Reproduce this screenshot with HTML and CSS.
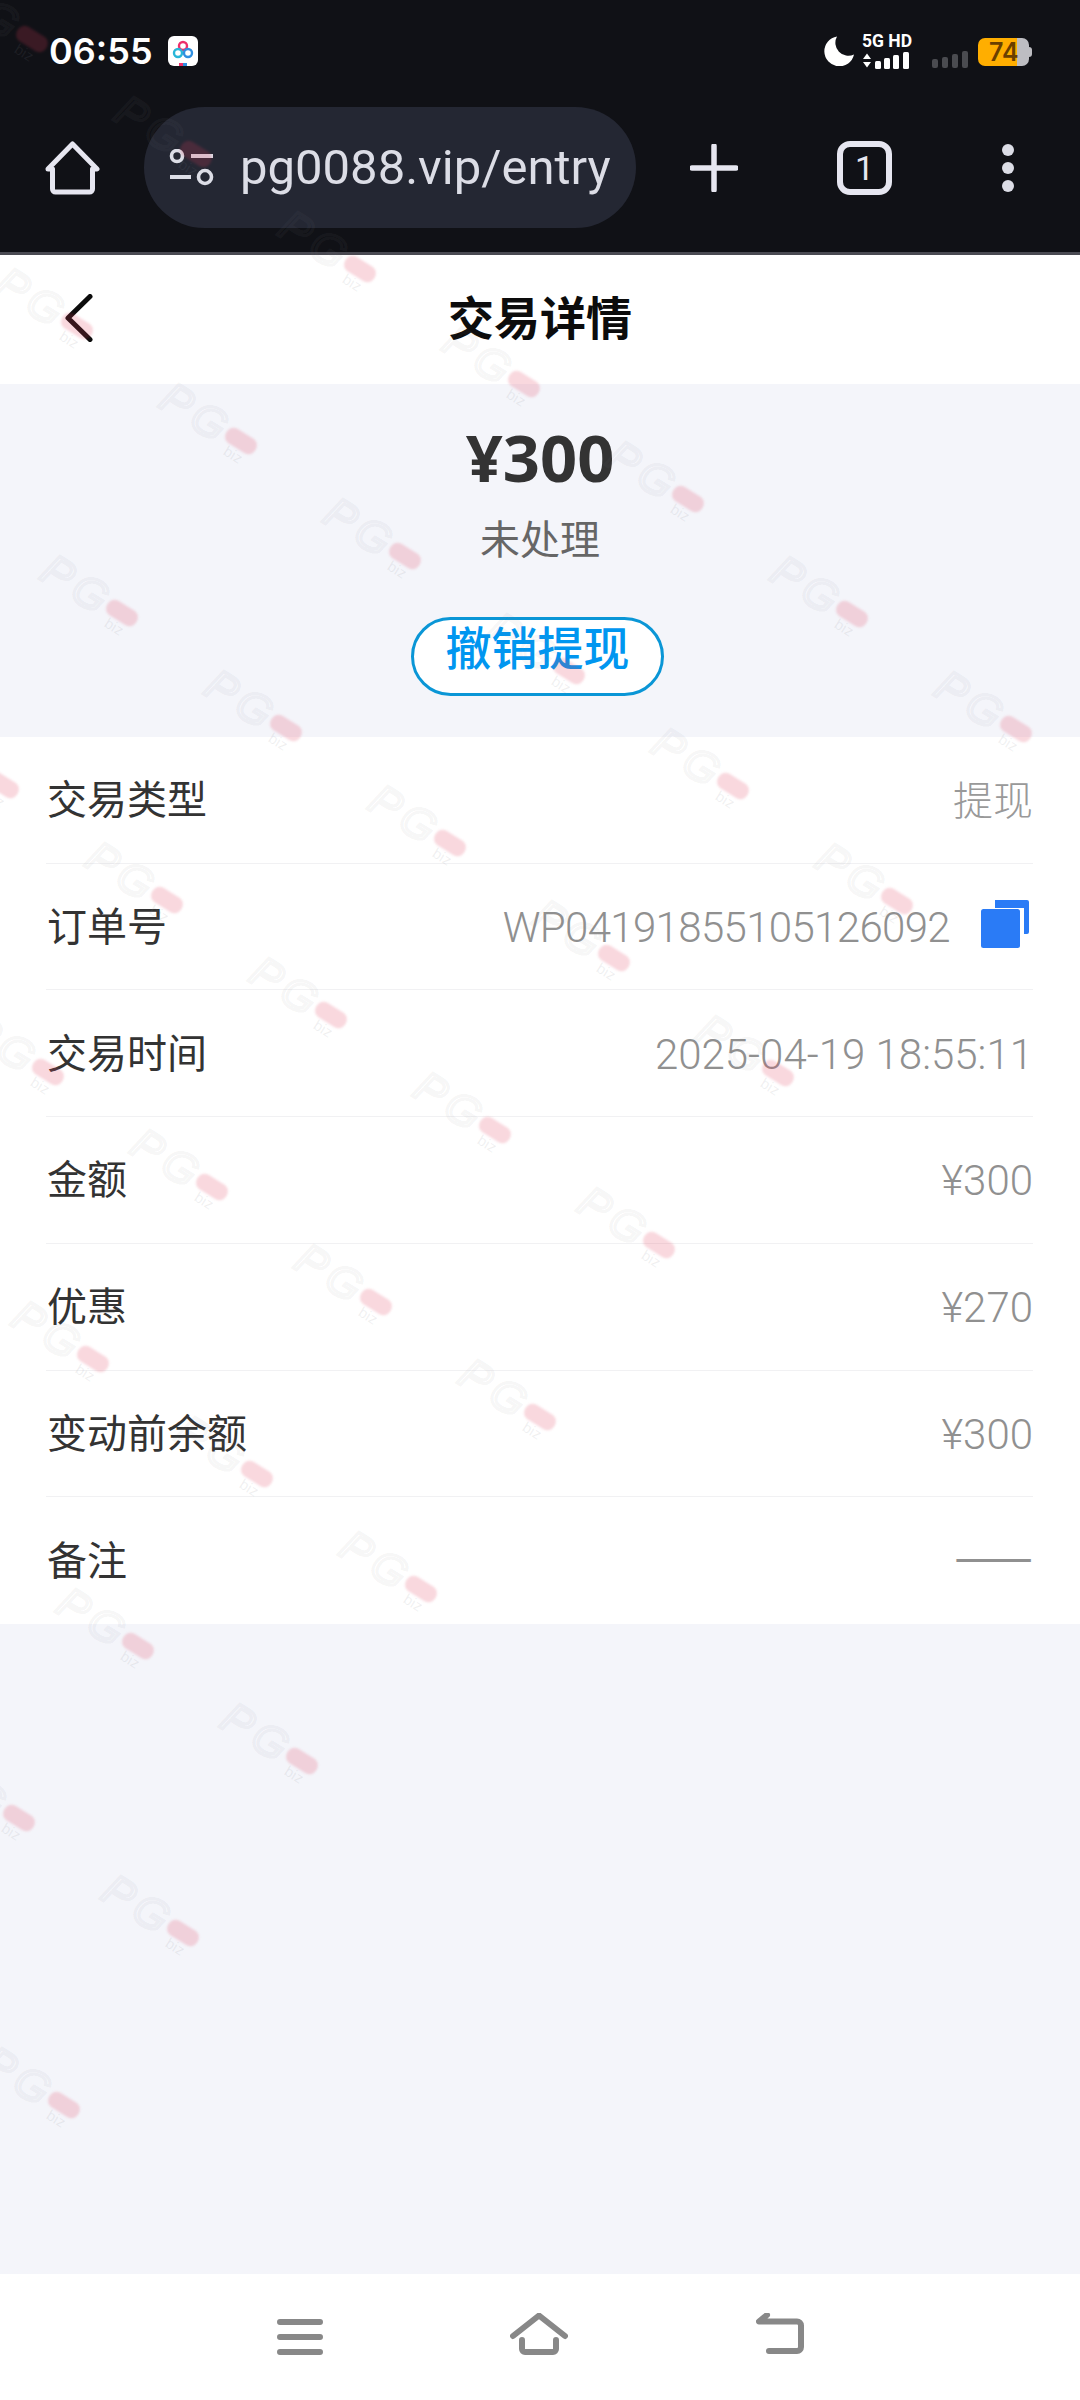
FILE: index.html
```html
<!DOCTYPE html>
<html lang="zh-CN">
<head>
<meta charset="utf-8">
<title>交易详情</title>
<link rel="stylesheet" href="styles.css">
</head>
<body>
<div class="phone">
  <div class="chrome">
    <div class="statusbar">
      <div class="status-left">
        <span class="clock">06:55</span>
        <svg class="app-icon" viewBox="0 0 30 30" width="30" height="30">
          <rect width="30" height="30" rx="6" fill="#fff"/>
          <circle cx="15" cy="10" r="4" fill="none" stroke="#ee2f6b" stroke-width="2.4"/>
          <circle cx="10" cy="17" r="4" fill="none" stroke="#29b6d8" stroke-width="2.4"/>
          <circle cx="20" cy="17" r="4" fill="none" stroke="#2f8fe0" stroke-width="2.4"/>
          <rect x="11" y="27" width="4" height="3" fill="#ee2f6b"/>
          <rect x="15" y="27" width="4" height="3" fill="#2f8fe0"/>
        </svg>
      </div>
      <div class="status-right">
        <svg class="moon" viewBox="0 0 30 30" width="30" height="30"><path d="M13 0.5A15 15 0 1 0 30 18.5 A13 13 0 0 1 13 0.5Z" fill="#fff"/></svg>
        <div class="net">
          <span class="net-label">5G HD</span>
          <svg viewBox="0 0 48 17" width="48" height="17">
            <path d="M1 7L5 1.500 9 7ZM1 10L5 15.500 9 10Z" fill="#fff"/>
            <g fill="#fff"><rect x="13" y="9" width="6" height="8" rx="1.500"/><rect x="22" y="6" width="6" height="11" rx="1.500"/><rect x="31" y="3" width="6" height="14" rx="1.500"/><rect x="41" y="0" width="6" height="17" rx="1.500"/></g>
          </svg>
        </div>
        <svg class="sim2" viewBox="0 0 36 17" width="36" height="17">
          <g fill="#4a4b50"><rect x="0" y="8" width="6" height="9" rx="2"/><rect x="10" y="6" width="6" height="11" rx="2"/><rect x="20" y="3" width="6" height="14" rx="2"/><rect x="30" y="0" width="6" height="17" rx="2"/></g>
        </svg>
        <div class="battery"><span class="battery-level">74</span></div>
      </div>
    </div>
    <div class="toolbar">
      <svg class="tb-home" viewBox="0 0 55 54" width="55" height="54"><path d="M3 28L27.500 3 52 28H47.500V48a3 3 0 0 1-3 3H10.500a3 3 0 0 1-3-3V28Z" fill="none" stroke="#e6e6f0" stroke-width="5" stroke-linejoin="round"/></svg>
      <div class="urlbar">
        <svg class="tune" viewBox="0 0 45 38" width="45" height="38">
          <g fill="none" stroke="#dcdde6" stroke-width="3.600"><circle cx="8" cy="7" r="5.500"/><circle cx="36" cy="28" r="6.500"/></g>
          <g fill="#dcdde6"><rect x="22" y="5" width="22" height="4"/><rect x="1" y="26" width="21" height="4"/></g>
        </svg>
        <span class="url">pg0088.vip/entry</span>
      </div>
      <svg class="tb-plus" viewBox="0 0 48 48" width="48" height="48"><path d="M24 2V46M2 24H46" stroke="#e6e6f0" stroke-width="5.500" stroke-linecap="round"/></svg>
      <div class="tabs">1</div>
      <svg class="tb-dots" viewBox="0 0 12 48" width="12" height="48"><g fill="#dcdde6"><circle cx="6" cy="6" r="6"/><circle cx="6" cy="24" r="6"/><circle cx="6" cy="42" r="6"/></g></svg>
    </div>
  </div>

  <header class="pagehead">
    <svg class="back" viewBox="0 0 28 48" width="28" height="48"><path d="M25 2.500L3 24 25 45.500" fill="none" stroke="#0c0c0c" stroke-width="5" stroke-linecap="round" stroke-linejoin="round"/></svg>
    <h1 class="title">交易详情</h1>
  </header>

  <main class="content">
    <section class="hero">
      <div class="amount">¥300</div>
      <div class="state">未处理</div>
      <div class="cancel">撤销提现</div>
    </section>

    <section class="list">
      <div class="row"><span class="label">交易类型</span><span class="value value-cjk">提现</span></div>
      <div class="row"><span class="label">订单号</span><span class="value value-order">WP04191855105126092
        <svg class="copy" viewBox="0 0 48 48" width="48" height="48"><path d="M14 0H46a2 2 0 0 1 2 2V32a2 2 0 0 1-2 2H43V8H14Z" fill="#2a7bf6"/><rect x="0" y="9" width="39" height="39" rx="2.500" fill="#2a7bf6"/></svg></span></div>
      <div class="row"><span class="label">交易时间</span><span class="value">2025-04-19 18:55:11</span></div>
      <div class="row"><span class="label">金额</span><span class="value">¥300</span></div>
      <div class="row"><span class="label">优惠</span><span class="value">¥270</span></div>
      <div class="row"><span class="label">变动前余额</span><span class="value">¥300</span></div>
      <div class="row"><span class="label">备注</span><span class="value value-dash">——</span></div>
    </section>
  </main>

  <nav class="navbar">
    <svg viewBox="0 0 46 36" width="46" height="36"><path d="M3 3H43M3 18H43M3 33H43" stroke="#888" stroke-width="6" stroke-linecap="round"/></svg>
    <svg class="nav-raised" viewBox="0 0 58 42" width="58" height="42"><path d="M3 23L29 2.500 55 23M12 27V36a3 3 0 0 0 3 3H43a3 3 0 0 0 3-3V27" fill="none" stroke="#888" stroke-width="6" stroke-linecap="round" stroke-linejoin="round"/></svg>
    <svg class="nav-raised" viewBox="0 0 48 42" width="48" height="42"><path d="M11 2L3 8.500H41a4 4 0 0 1 4 4V34a4 4 0 0 1-4 4H13" fill="none" stroke="#888" stroke-width="6" stroke-linecap="round" stroke-linejoin="round"/></svg>
  </nav>

  <svg class="watermarks" viewBox="0 0 1080 2400" width="1080" height="2400" aria-hidden="true">
    <defs>
      <g id="wm" transform="rotate(32)">
        <text class="wm-pg" x="-90" y="15">PG</text>
        <rect class="wm-pill" x="-17" y="-8.500" width="34" height="17" rx="8"/>
        <text class="wm-biz" x="-9" y="21">biz</text>
      </g>
    </defs>
    <use href="#wm" x="32" y="39"/><use href="#wm" x="196" y="154"/><use href="#wm" x="360" y="269"/><use href="#wm" x="524" y="384"/><use href="#wm" x="688" y="499"/><use href="#wm" x="852" y="614"/><use href="#wm" x="1016" y="729"/>
    <use href="#wm" x="77" y="326"/><use href="#wm" x="241" y="441"/><use href="#wm" x="405" y="556"/><use href="#wm" x="569" y="671"/><use href="#wm" x="733" y="786"/><use href="#wm" x="897" y="901"/>
    <use href="#wm" x="122" y="613"/><use href="#wm" x="286" y="728"/><use href="#wm" x="450" y="843"/><use href="#wm" x="614" y="958"/><use href="#wm" x="778" y="1073"/>
    <use href="#wm" x="3" y="785"/><use href="#wm" x="167" y="900"/><use href="#wm" x="331" y="1015"/><use href="#wm" x="495" y="1130"/><use href="#wm" x="659" y="1245"/>
    <use href="#wm" x="48" y="1072"/><use href="#wm" x="212" y="1187"/><use href="#wm" x="376" y="1302"/><use href="#wm" x="540" y="1417"/>
    <use href="#wm" x="93" y="1359"/><use href="#wm" x="257" y="1474"/><use href="#wm" x="421" y="1589"/>
    <use href="#wm" x="138" y="1646"/><use href="#wm" x="302" y="1761"/>
    <use href="#wm" x="19" y="1818"/><use href="#wm" x="183" y="1933"/>
    <use href="#wm" x="64" y="2105"/>
  </svg>
</div>
</body>
</html>
```
FILE: styles.css
```css
* { box-sizing: border-box; }
html, body { margin: 0; padding: 0; }
body { width: 1080px; height: 2400px; overflow: hidden; background: #f4f5fa; font-family: "Noto Sans CJK SC", "Noto Sans", sans-serif; }
.phone { position: relative; width: 1080px; height: 2400px; display: flex; flex-direction: column; }

.chrome { background: #101116; border-bottom: 3px solid #4a4a52; height: 255px; color: #fff; flex: none; }
.statusbar { height: 102px; padding: 0 48px 0 49px; display: flex; align-items: center; justify-content: space-between; }
.status-left { display: flex; align-items: center; gap: 15px; }
.clock { font-family: Inter, sans-serif; font-size: 36px; font-weight: 600; line-height: 40px; color: #fff; }
.app-icon { display: block; }
.status-right { display: flex; align-items: center; }
.moon { display: block; }
.net { display: flex; flex-direction: column; margin-left: 8px; gap: 4px; width: 48px; }
.net-label { font-family: "Roboto", sans-serif; font-weight: 700; font-size: 17.500px; line-height: 14px; white-space: nowrap; color: #fff; }
.net svg { display: block; }
.sim2 { display: block; margin-left: 22px; margin-top: 17px; }
.battery { position: relative; margin-left: 10px; margin-right: 3px; width: 51px; height: 28px; border-radius: 7px; background: linear-gradient(90deg, #ffae00 39px, #bdbdc2 39px); margin-top: 1px; display: flex; align-items: center; padding-left: 11px; }
.battery::after { content: ""; position: absolute; right: -3px; top: 9px; width: 3px; height: 10px; border-radius: 0 3px 3px 0; background: #bdbdc2; }
.battery-level { font-family: Inter, sans-serif; font-weight: 600; font-size: 25px; line-height: 28px; color: #6a3f00; }

.toolbar { display: flex; align-items: center; padding: 5px 0 24px 45px; }
.toolbar svg { display: block; flex: none; }
.urlbar { width: 492px; height: 121px; margin-left: 44px; border-radius: 61px; background: #242733; display: flex; align-items: center; padding-left: 25px; flex: none; }
.url { font-family: Roboto, sans-serif; font-size: 49px; line-height: 60px; font-weight: 400; color: #dcdde6; margin-left: 26px; white-space: nowrap; }
.tb-plus { margin-left: 54px; }
.tabs { margin-left: 99px; width: 55px; height: 54px; border: 6px solid #e6e6f0; border-radius: 13px; display: flex; align-items: center; justify-content: center; font-family: Roboto, sans-serif; font-weight: 400; font-size: 34px; color: #e6e6f0; flex: none; }
.tb-dots { margin-left: 110px; }

.pagehead { height: 129px; background: #fff; display: grid; grid-template-columns: 1fr auto 1fr; align-items: center; padding-left: 65px; padding-right: 65px; flex: none; }
.back { display: block; margin-top: -4px; }
.title { margin: -9px 0 0; font-size: 46px; line-height: 60px; font-weight: 700; color: #0c0c0c; }

.content { flex: 1; display: flex; flex-direction: column; }
.hero { height: 353px; display: flex; flex-direction: column; align-items: center; padding-top: 38px; }
.amount { font-family: "Noto Sans", sans-serif; font-weight: 700; font-size: 65px; line-height: 70px; color: #333; }
.state { margin-top: 20px; font-size: 40px; line-height: 50px; color: #666; }
.cancel { margin: 55px 0 0 -5px; width: 253px; height: 79px; border: 3px solid #0a96d6; border-radius: 40px; background: #fff; color: #0096f0; font-size: 46px; font-weight: 500; line-height: 50px; text-align: center; }

.list { background: #fff; padding: 0 47px 0 46px; height: 887px; display: grid; grid-auto-rows: 1fr; flex: none; }
.row { display: flex; align-items: center; justify-content: space-between; border-bottom: 1.500px solid #f1f1f3; }
.row:last-child { border-bottom: 0; }
.label { margin: 0 0 5px 1px; font-size: 40px; color: #333; line-height: 50px; }
.value { display: flex; align-items: center; font-family: Roboto, "Noto Sans CJK SC", sans-serif; font-size: 42px; font-weight: 300; color: #909090; line-height: 50px; white-space: nowrap; margin-top: 3px; }
.value-cjk { font-size: 40px; color: #999; margin-top: 4px; }
.value-order { letter-spacing: -0.650px; }
.value-dash { font-family: "Noto Sans CJK SC", sans-serif; font-size: 47px; font-weight: 400; margin: 0 0 13px; }
.copy { display: block; margin: 0 4px 8px 31px; }

.navbar { height: 126px; background: #fff; display: flex; align-items: center; justify-content: center; gap: 187.500px; flex: none; }
.navbar svg { display: block; }
.nav-raised { margin-top: -6px; }

.watermarks { position: absolute; left: 0; top: 0; pointer-events: none; }
.wm-pg { font-family: "Liberation Sans", sans-serif; font-style: italic; font-weight: 400; font-size: 44px; letter-spacing: 6px; fill: none; stroke: rgba(130,130,140,.085); stroke-width: 3px; }
.wm-pill { fill: rgba(225,60,90,.2); filter: blur(1px); }
.wm-biz { font-family: "Liberation Sans", sans-serif; font-size: 15px; fill: rgba(130,130,140,.12); }
```
